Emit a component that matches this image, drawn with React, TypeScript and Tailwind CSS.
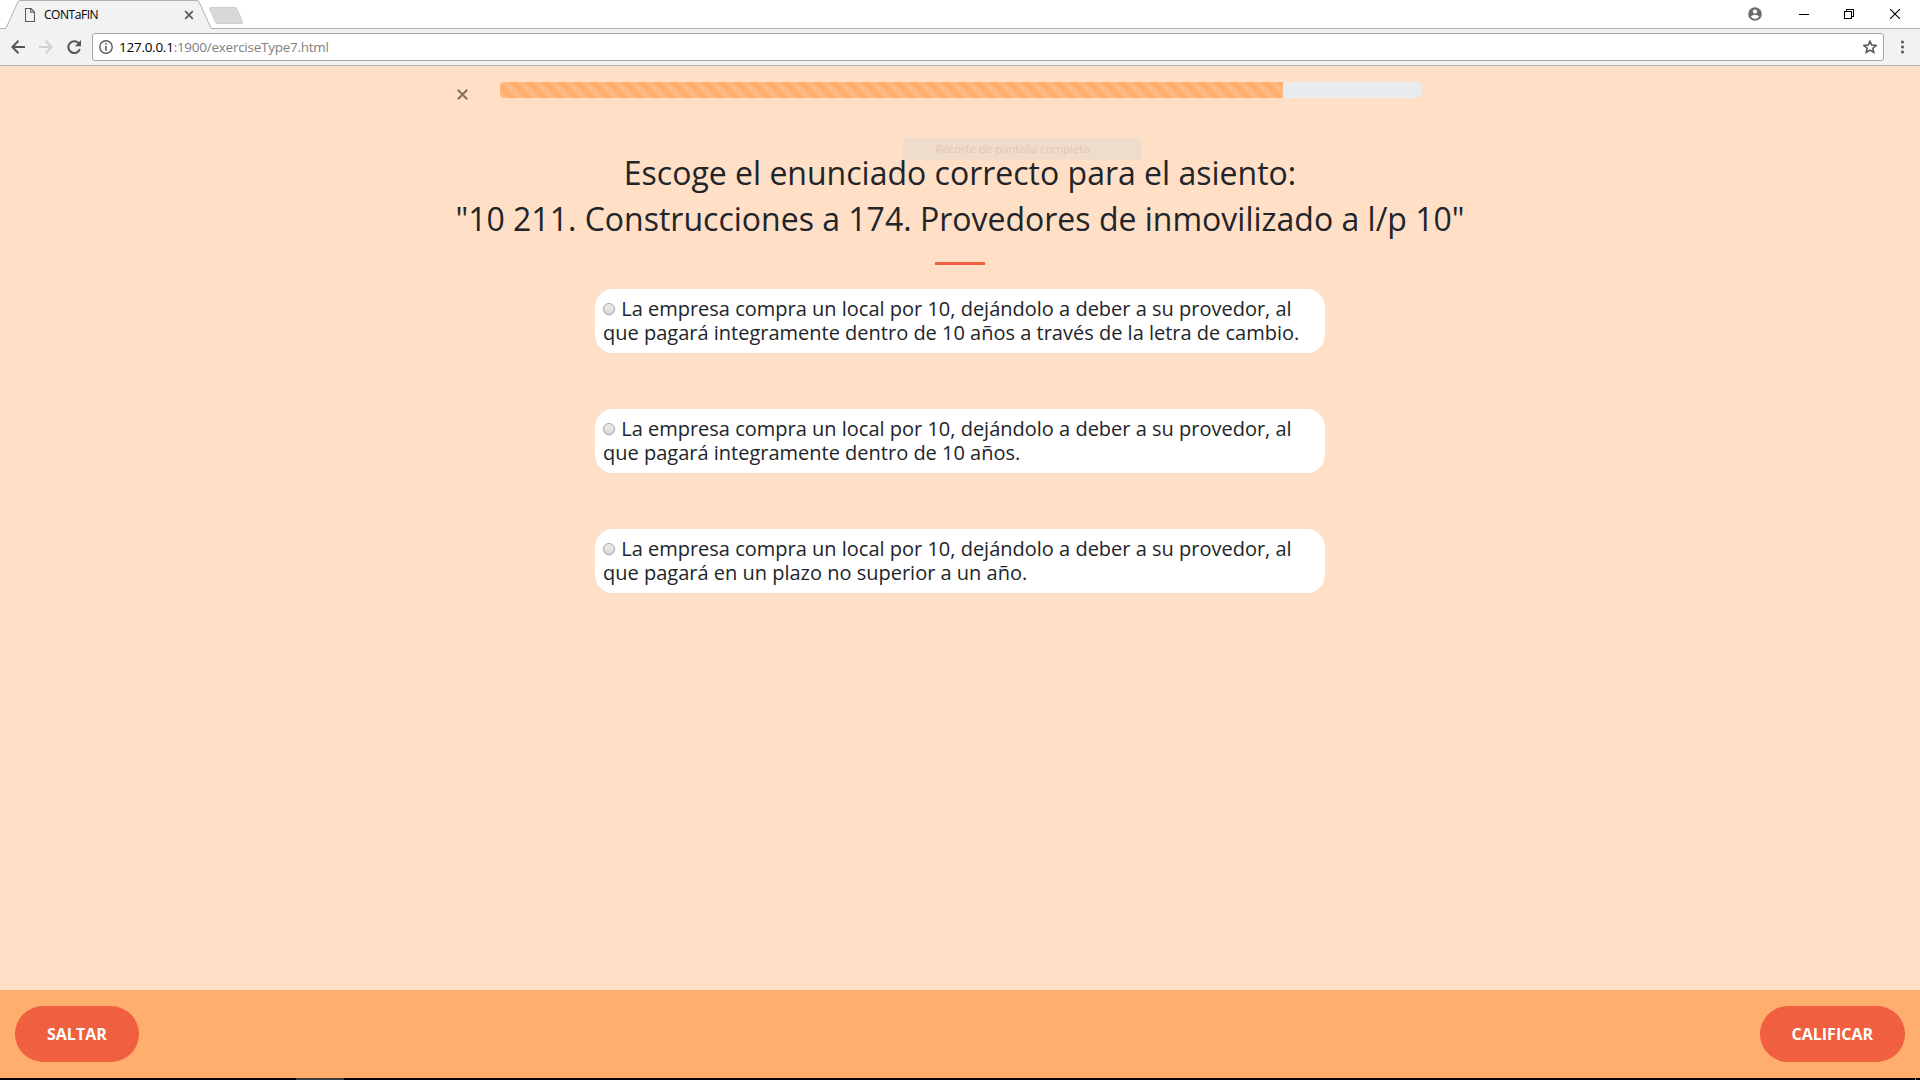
const options = [
  "La empresa compra un local por 10, dejándolo a deber a su provedor, al que pagará integramente dentro de 10 años a través de la letra de cambio.",
  "La empresa compra un local por 10, dejándolo a deber a su provedor, al que pagará integramente dentro de 10 años.",
  "La empresa compra un local por 10, dejándolo a deber a su provedor, al que pagará en un plazo no superior a un año.",
];

function TabStrip() {
  return (
    <div className="relative flex h-7 items-center bg-white">
      <svg className="absolute left-0 top-0" width="250" height="29" viewBox="0 0 250 29">
        <path d="M5.500 29L18 1.500Q18.500 .5 19.500 .5H197.500Q198.500 .5 199 1.500L211.500 29Z" fill="#f2f2f2" />
        <path d="M0 28.500H4Q6 28.500 6.500 27L18 1.800Q18.500 .5 20 .5H197Q198.500 .5 199 1.800L210.500 27Q211 28.500 213 28.500" fill="none" stroke="#b0b0b0" />
        <path d="M210.500 7.500H235Q236.500 7.500 237 9L242.500 21.500Q243.300 23.500 242 23.500H217.500Q216 23.500 215.500 22L209.500 9Q209 7.500 210.500 7.500Z" fill="#d8d8d8" stroke="#cecece" />
      </svg>
      <div className="relative flex w-[211px] items-center pl-[25px] pt-[2px]">
        <svg width="10" height="14" viewBox="0 0 10 14" fill="none" stroke="#5a5a5a" strokeWidth="1.1">
          <path d="M.5.5H6L9.500 4V13.500H.5Z" />
          <path d="M5.700.5V4.300H9.500" />
        </svg>
        <span className="ml-[9px] flex-1 text-[12px] leading-4 tracking-[-0.45px] text-black">CONTaFIN</span>
        <svg className="mr-[17px]" width="10" height="10" viewBox="0 0 10 10" stroke="#5a5a5a" strokeWidth="1.7">
          <path d="M1.200 1.200L8.800 8.800M8.800 1.200L1.200 8.800" />
        </svg>
      </div>
      <div className="ml-auto flex items-center pr-5">
        <svg className="mr-[37px]" width="14" height="14" viewBox="0 0 14 14">
          <circle cx="7" cy="7" r="6.800" fill="#6b6b6b" />
          <circle cx="7" cy="4.600" r="2.100" fill="#fff" />
          <path d="M2.800 9.600Q4.500 7.700 7 7.700T11.200 9.600Q9.700 12 7 12T2.800 9.600Z" fill="#fff" />
        </svg>
        <svg className="mr-[35px]" width="10" height="10" viewBox="0 0 10 10" shapeRendering="crispEdges">
          <path d="M0 5H10V6H0Z" fill="#000" />
        </svg>
        <svg className="mr-[36px]" width="10" height="10" viewBox="0 0 10 10" fill="none" stroke="#000" shapeRendering="crispEdges">
          <path d="M.5 2.500H7.500V9.500H.5ZM2.500 2.500V.5H9.500V7.500H7.500" />
        </svg>
        <svg width="10" height="10" viewBox="0 0 10 10" stroke="#000" strokeWidth="1.100">
          <path d="M0 0L10 10M10 0L0 10" />
        </svg>
      </div>
    </div>
  );
}

function Toolbar() {
  return (
    <div className="flex h-[38px] items-center border-b border-[#b0b0b0] border-t bg-[#f2f2f2] pl-[11px]">
      <svg width="14" height="14" viewBox="0 0 14 14" fill="none" stroke="#565656" strokeWidth="2">
        <path d="M14 7H1.500M7.500.8L1.300 7L7.500 13.200" />
      </svg>
      <svg className="ml-[14px]" width="14" height="14" viewBox="0 0 14 14" fill="none" stroke="#d2d2d2" strokeWidth="2">
        <path d="M0 7H12.500M6.500.8L12.700 7L6.500 13.200" />
      </svg>
      <svg className="ml-[14px]" width="15" height="14" viewBox="0 0 15 14">
        <path d="M12.800 9.200A5.900 5.900 0 1 1 11.500 3" fill="none" stroke="#565656" strokeWidth="2.100" />
        <path d="M14 0V6.200H7.800Z" fill="#565656" />
      </svg>
      <div className="ml-[10px] flex h-7 w-[1792px] items-center rounded-[3px] border border-[#a8a8a8] bg-white pl-[6px] pr-[6px]">
        <svg width="14" height="14" viewBox="0 0 14 14">
          <circle cx="7" cy="7" r="6.200" fill="none" stroke="#5a5a5a" strokeWidth="1.400" />
          <path d="M6.200 3.200H7.800V4.800H6.200ZM6.200 6H7.800V10.800H6.200Z" fill="#5a5a5a" />
        </svg>
        <div className="ml-[6px] flex-1 text-[13.500px] leading-5 tracking-[-0.26px] text-[#808080]">
          <span className="text-black">127.0.0.1</span>:1900/exerciseType7.html
        </div>
        <svg width="14" height="14" viewBox="0 0 14 14" fill="none" stroke="#565656" strokeWidth="1.500">
          <path d="M7 1.200L8.700 5.100L13 5.500L9.800 8.200L10.800 12.500L7 10.200L3.200 12.500L4.200 8.200L1 5.500L5.300 5.100Z" />
        </svg>
      </div>
      <svg className="ml-[17px]" width="4" height="14" viewBox="0 0 4 14" fill="#5a5a5a">
        <circle cx="1.500" cy="2" r="1.550" />
        <circle cx="1.500" cy="7" r="1.550" />
        <circle cx="1.500" cy="12" r="1.550" />
      </svg>
    </div>
  );
}

function Option({ text }: { text: string }) {
  return (
    <label className="block h-16 w-[730px] rounded-[18px] bg-white py-2 pl-2 pr-[20px] text-[20px] leading-6 text-[#212529]">
      <span className="mr-px inline-block h-3 w-3 rounded-full border border-[#a5a5a5] bg-linear-to-b from-[#ececec] to-[#d8d8d8] align-[1.500px] shadow-[0_1px_0_#e8e8e8]" />{" "}
      {text}
    </label>
  );
}

export default function App() {
  return (
    <div className="flex h-[1080px] w-[1920px] flex-col overflow-hidden bg-[#ffdfc5] font-['Open_Sans','Noto_Sans',sans-serif]">
      <header>
        <TabStrip />
        <Toolbar />
      </header>
      <main className="flex flex-1 flex-col items-center">
        <div className="flex h-8 w-[1006px] items-start pt-4">
          <svg className="mt-[7px]" width="11" height="11" viewBox="0 0 11 11" stroke="#80705f" strokeWidth="2">
            <path d="M.8.8L10.200 10.200M10.200.8L.8 10.200" />
          </svg>
          <div className="ml-8 h-4 w-[921px] overflow-hidden rounded bg-[#e9ecef]">
            <div className="h-full w-[85%] bg-[#ffae6e] bg-[linear-gradient(45deg,rgba(255,255,255,0.15)_25%,transparent_25%,transparent_50%,rgba(255,255,255,0.15)_50%,rgba(255,255,255,0.15)_75%,transparent_75%,transparent)] bg-[length:16px_16px]" />
          </div>
        </div>
        <div className="relative mt-[52px] text-center">
          <div className="absolute -top-3 left-[448px] h-[22px] w-[238px] bg-[#efdccb] pl-8 text-left text-[11.500px] leading-[22px] tracking-[-0.1px] whitespace-nowrap text-[#e4c6ae]">
            Recorte de pantalla completa
          </div>
          <h2 className="relative text-[32px] leading-[46px] whitespace-nowrap text-[#212529]">
            Escoge el enunciado correcto para el asiento:
            <br />
            "10 211. Construcciones a 174. Provedores de inmovilizado a l/p 10"
          </h2>
        </div>
        <hr className="mt-5 h-[3px] w-[50px] border-0 bg-[#f05f40]" />
        <div className="mt-6 flex flex-col gap-14">
          {options.map((text) => (
            <Option key={text} text={text} />
          ))}
        </div>
      </main>
      <footer className="flex h-[88px] items-center justify-between bg-[#ffae6e] px-[15px] text-[16px] font-bold text-white">
        <button className="h-14 rounded-full bg-[#f05f40] px-8">SALTAR</button>
        <button className="h-14 rounded-full bg-[#f05f40] px-8">CALIFICAR</button>
      </footer>
      <div className="flex h-[2px] justify-between bg-black pl-[296px] pr-1">
        <div className="w-12 bg-[#3c3c3c]" />
        <div className="w-px bg-[#7a7a7a]" />
      </div>
    </div>
  );
}
